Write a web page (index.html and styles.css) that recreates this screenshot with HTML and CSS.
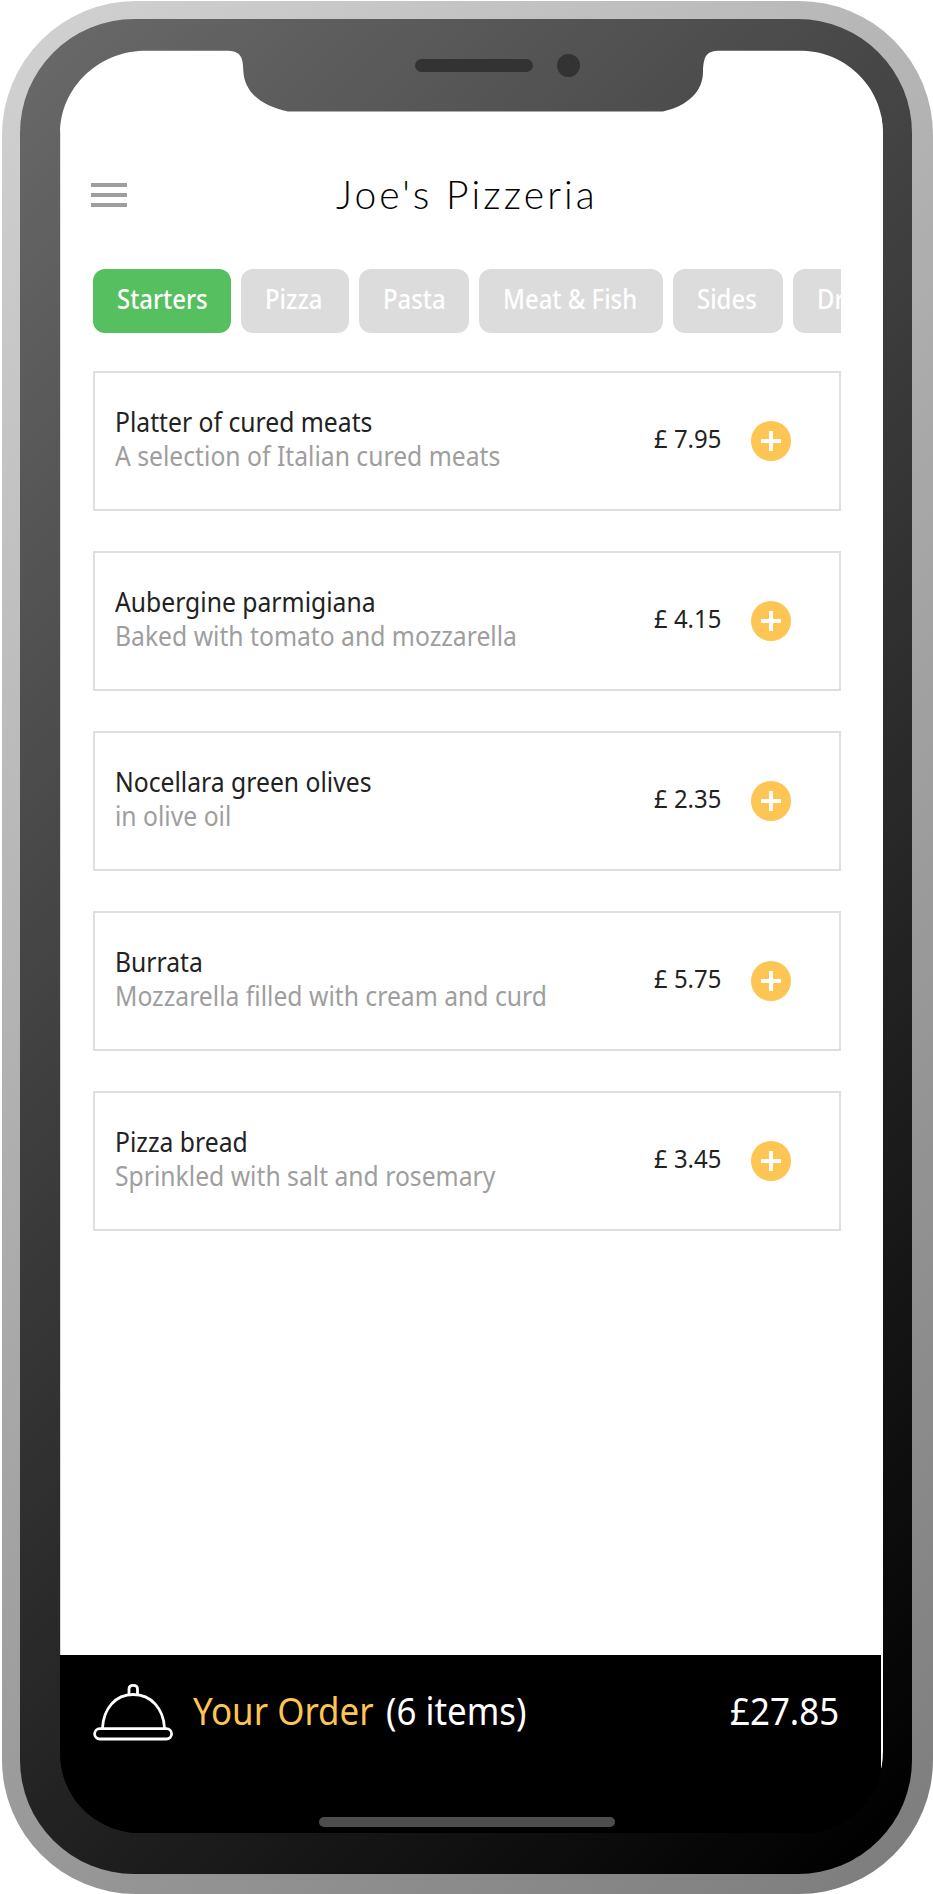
FILE: index.html
```html
<!DOCTYPE html>
<html lang="en">
<head>
<meta charset="utf-8">
<title>Joe's Pizzeria</title>
<link rel="stylesheet" href="styles.css">
</head>
<body>
<div class="phone">
  <div class="bezel">
    <div class="screen">
      <header class="header">
        <div class="burger"><i></i><i></i><i></i></div>
        <h1 class="brand">Joe's Pizzeria</h1>
      </header>
      <nav class="tabs">
        <a class="tab tab-starters active"><span>Starters</span></a>
        <a class="tab tab-pizza"><span>Pizza</span></a>
        <a class="tab tab-pasta"><span>Pasta</span></a>
        <a class="tab tab-meat"><span>Meat &amp; Fish</span></a>
        <a class="tab tab-sides"><span>Sides</span></a>
        <a class="tab tab-drinks"><span>Drinks</span></a>
      </nav>
      <main class="menu">
        <article class="card">
          <div class="info"><h2>Platter of cured meats</h2><p>A selection of Italian cured meats</p></div>
          <span class="price">£ 7.95</span><button class="add"></button>
        </article>
        <article class="card">
          <div class="info"><h2>Aubergine parmigiana</h2><p>Baked with tomato and mozzarella</p></div>
          <span class="price">£ 4.15</span><button class="add"></button>
        </article>
        <article class="card">
          <div class="info"><h2>Nocellara green olives</h2><p>in olive oil</p></div>
          <span class="price">£ 2.35</span><button class="add"></button>
        </article>
        <article class="card">
          <div class="info"><h2>Burrata</h2><p>Mozzarella filled with cream and curd</p></div>
          <span class="price">£ 5.75</span><button class="add"></button>
        </article>
        <article class="card">
          <div class="info"><h2>Pizza bread</h2><p>Sprinkled with salt and rosemary</p></div>
          <span class="price">£ 3.45</span><button class="add"></button>
        </article>
      </main>
      <footer class="order">
        <div class="order-row">
          <svg class="cloche" width="80" height="58" viewBox="0 0 80 58" fill="none" stroke="#fff" stroke-width="2.8">
            <path d="M36 10V5Q36 1.400 40 1.400Q44.500 1.400 44.500 5V10"/>
            <path d="M9.500 44C10.500 25 22 10.500 40.200 10.500S70.500 25 71.500 44"/>
            <rect x="1.600" y="44.600" width="77" height="10.400" rx="5.200"/>
          </svg>
          <span class="order-label">Your Order</span>
          <span class="order-count">(6 items)</span>
          <span class="order-total">£27.85</span>
        </div>
        <div class="home-bar"></div>
      </footer>
    </div>
    <div class="speaker"></div>
    <div class="camera"></div>
  </div>
</div>
</body>
</html>
```
FILE: styles.css
```css
* { box-sizing: border-box; }

body {
  margin: 0;
  background: #fff;
  font-family: "Noto Sans", "Open Sans", sans-serif;
}

.phone {
  width: 931px;
  height: 1893.5px;
  margin: 0.5px 0 0 2px;
  padding: 18.500px 21px 20.500px 18.300px;
  border-radius: 134px;
  background: linear-gradient(135deg, #d2d2d2, #7c7c7c);
}

.bezel {
  position: relative;
  height: 1854.500px;
  padding: 31px 29px 40px 39.700px;
  border-radius: 114px;
  background: linear-gradient(135deg, #6a6a6a, #000 98%);
}

.screen {
  display: flex;
  flex-direction: column;
  width: 823px;
  height: 1783px;
  background:
    linear-gradient(#fff, #fff) top right / 2px 1718px no-repeat,
    linear-gradient(#fff 1605px, #000 1605px);
  clip-path: path("M83 .7H166C180 .7 183 6 183.300 20C184 43 202 56 228 61.400H603C628 56 643 41 643 22C643.500 5 647 .7 660 .7H743C787 2 823 38 823 82V1701C823 1750 786 1783.300 743 1783.300H82C38 1783.300 .2 1750 .2 1703V83C.2 38 38 2 83 .7Z");
}

.speaker, .camera {
  position: absolute;
  background: #333;
}

.speaker {
  left: 394.500px;
  top: 40px;
  width: 118.500px;
  height: 13px;
  border-radius: 7px;
}

.camera {
  left: 536.500px;
  top: 34.500px;
  width: 23px;
  height: 23px;
  border-radius: 50%;
}

.header {
  display: flex;
  align-items: center;
  height: 92px;
  margin-top: 99px;
  padding-left: 31px;
}

.burger {
  display: grid;
  gap: 6px;
  width: 36px;
}

.burger i {
  height: 4px;
  background: #9e9e9e;
}

.brand {
  margin: -3px 0 0 209px;
  font: 300 39px/60px "Bradley Hand", Lato, sans-serif;
  letter-spacing: 3.100px;
  color: #000;
  white-space: nowrap;
}

.tabs {
  display: flex;
  gap: 10px;
  width: 748px;
  margin: 28px 0 0 33px;
  overflow: hidden;
}

.tab {
  flex: none;
  height: 64px;
  padding-left: 24px;
  border-radius: 12px;
  background: #dcdcdc;
  color: #fff;
  font-size: 26.500px;
  font-weight: 500;
  line-height: 60px;
  white-space: nowrap;
}

.tab span {
  display: inline-block;
  transform: scaleX(0.902);
  transform-origin: left;
}

.tab.active { background: #56c060; }
.tab-starters { width: 138px; }
.tab-pizza { width: 108px; }
.tab-pasta { width: 110px; }
.tab-meat { width: 184px; }
.tab-sides { width: 110px; }
.tab-drinks { width: 120px; }

.menu {
  display: grid;
  gap: 40px;
  width: 748px;
  margin: 38px 0 0 33px;
}

.card {
  display: flex;
  align-items: center;
  height: 140px;
  padding: 0 48px 0 20px;
  border: 2px solid #dfdfdf;
}

.info {
  width: 539px;
  height: 72px;
}

.info h2, .info p {
  margin: 0;
  font-size: 26.500px;
  font-weight: 400;
  line-height: 34px;
  white-space: nowrap;
  transform: scaleX(0.932);
  transform-origin: left;
}

.info h2 { color: #222; }
.info p { color: #9e9e9e; }

.price {
  width: 97px;
  margin-top: -6px;
  color: #222;
  font-size: 26px;
  line-height: 36px;
  white-space: nowrap;
  transform: scaleX(0.92);
  transform-origin: left;
}

.add {
  flex: none;
  width: 40px;
  height: 40px;
  padding: 0;
  border: 0;
  border-radius: 50%;
  background:
    linear-gradient(#fff, #fff) center / 20px 4px no-repeat,
    linear-gradient(#fff, #fff) center / 4px 20px no-repeat,
    #fdc553;
}

.order {
  display: flex;
  flex-direction: column;
  width: 821px;
  height: 178px;
  margin-top: auto;
  background: #000;
  color: #fff;
}

.order-row {
  display: flex;
  height: 162px;
  padding: 29px 0 0 33px;
  font-size: 38px;
  line-height: 53px;
  white-space: nowrap;
}

.order-row span {
  transform: scaleX(0.918);
  transform-origin: left;
}

.order-label {
  width: 192px;
  margin-left: 20px;
  margin-right: 1px;
  color: #fdc553;
}

.order-count { width: 344px; }

.home-bar {
  width: 296px;
  height: 10px;
  margin-left: 259px;
  border-radius: 5px;
  background: #4d4d4d;
}
```
